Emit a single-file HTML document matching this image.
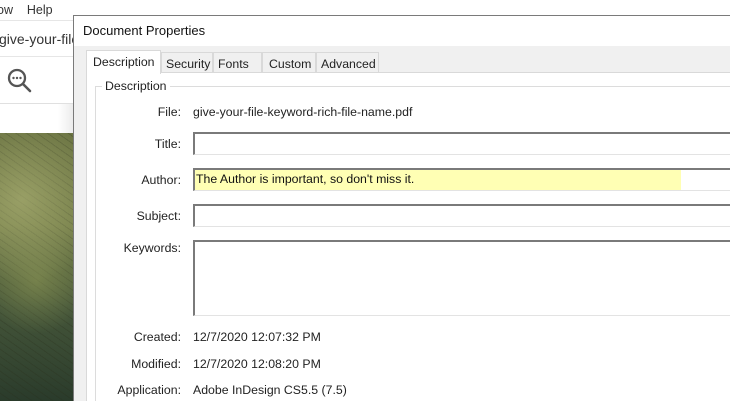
<!DOCTYPE html>
<html><head><style>
*{margin:0;padding:0;box-sizing:border-box}
html,body{width:730px;height:401px;overflow:hidden}
body{position:relative;background:#fff;font-family:"Liberation Sans",sans-serif;font-size:12.3px;color:#000}
.a{position:absolute}
.lbl{position:absolute;right:549px;text-align:right;font-size:12.3px;color:#222}
.val{position:absolute;left:193px;font-size:12.3px;color:#222}
.box{position:absolute;left:193px;width:537px;background:#fff;border-top:2px solid #7a7a7a;border-left:2px solid #7a7a7a;border-bottom:1px solid #e3e3e3}
.tab{position:absolute;top:52px;height:20px;border:1px solid #d9d9d9;border-bottom:none;background:#f0f0f0;font-size:12.3px;padding:4px 0 0 4px;color:#222}
</style></head><body>
<div class="a" style="left:0;top:0;width:73px;height:20px;background:#fff"></div>
<div class="a" style="left:-3px;top:3px;font-size:12.5px;color:#333">ow&nbsp;&nbsp;&nbsp;&nbsp;Help</div>
<div class="a" style="left:0;top:20px;width:73px;height:1px;background:#e6e6e6"></div>
<div class="a" style="left:-1px;top:31px;font-size:14px;color:#333">give-your-file</div>
<div class="a" style="left:0;top:56px;width:73px;height:1px;background:#e6e6e6"></div>
<svg class="a" style="left:6px;top:67px" width="28" height="28" viewBox="0 0 28 28"><circle cx="11" cy="11" r="8" fill="none" stroke="#555" stroke-width="2.3"/><line x1="17" y1="17" x2="24" y2="24" stroke="#555" stroke-width="2.6" stroke-linecap="round"/><circle cx="7.5" cy="11" r="1.2" fill="#555"/><circle cx="11" cy="11" r="1.2" fill="#555"/><circle cx="14.5" cy="11" r="1.2" fill="#555"/></svg>
<div class="a" style="left:0;top:103px;width:73px;height:1px;background:#e0e0e0"></div>
<div class="a" style="left:58px;top:104px;width:15px;height:29px;background:linear-gradient(90deg,#fff,#ececec)"></div>
<div class="a" style="left:0;top:133px;width:73px;height:268px;background:
radial-gradient(circle at 30% 25%,rgba(170,175,115,.7),transparent 40%),
radial-gradient(circle at 50% 55%,rgba(140,150,85,.6),transparent 35%),
repeating-linear-gradient(35deg,rgba(40,45,25,.25) 0 1px,transparent 1px 6px),
linear-gradient(180deg,#6c7544 0%,#737d48 35%,#45563a 65%,#2a3b2b 100%)"></div>
<div class="a" style="left:73px;top:15px;width:657px;height:386px;background:#f0f0f0;border-left:1px solid #7a7a7a;border-top:1px solid #7a7a7a"></div>
<div class="a" style="left:74px;top:16px;width:656px;height:30px;background:#fff"></div>
<div class="a" style="left:83px;top:23px;font-size:13px;color:#111">Document Properties</div>
<div class="a" style="left:86px;top:72px;width:644px;height:329px;background:#fff;border-left:1px solid #d9d9d9;border-top:1px solid #d9d9d9"></div>
<div class="tab" style="left:161px;width:52px">Security</div>
<div class="tab" style="left:213px;width:49px">Fonts</div>
<div class="tab" style="left:262px;width:54px;padding-left:6px">Custom</div>
<div class="tab" style="left:316px;width:63px">Advanced</div>
<div class="a" style="left:86px;top:50px;width:75px;height:24px;background:#fff;border:1px solid #d9d9d9;border-bottom:none;font-size:12.3px;padding:4px 0 0 6px;color:#222">Description</div>
<div class="a" style="left:95px;top:86px;width:635px;height:315px;border-left:1px solid #dcdcdc;border-top:1px solid #dcdcdc"></div>
<div class="a" style="left:102px;top:79px;background:#fff;padding:0 3px;color:#222">Description</div>
<div class="lbl" style="top:105px">File:</div><div class="val" style="top:105px">give-your-file-keyword-rich-file-name.pdf</div>
<div class="lbl" style="top:137px">Title:</div><div class="box" style="top:132px;height:23px"></div>
<div class="lbl" style="top:173px">Author:</div><div class="box" style="top:168px;height:23px;background:linear-gradient(90deg,#ffffb4 0,#ffffb4 486px,#fff 486px)"><span style="position:absolute;left:1px;top:2px;color:#111">The Author is important, so don't miss it.</span></div>
<div class="lbl" style="top:209px">Subject:</div><div class="box" style="top:204px;height:23px"></div>
<div class="lbl" style="top:241px">Keywords:</div><div class="box" style="top:240px;height:76px"></div>
<div class="lbl" style="top:330px">Created:</div><div class="val" style="top:330px">12/7/2020 12:07:32 PM</div>
<div class="lbl" style="top:357px">Modified:</div><div class="val" style="top:357px">12/7/2020 12:08:20 PM</div>
<div class="lbl" style="top:383px">Application:</div><div class="val" style="top:383px">Adobe InDesign CS5.5 (7.5)</div>
</body></html>
